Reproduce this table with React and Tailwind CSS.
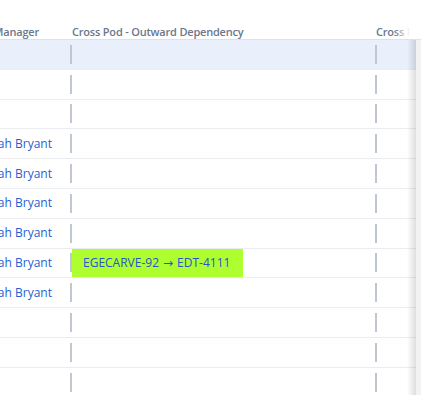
import React from "react";

const rows = [
  { name: false },
  { name: false },
  { name: false },
  { name: true },
  { name: true },
  { name: true },
  { name: true },
  { name: true, dep: true },
  { name: true },
  { name: false },
  { name: false },
  { name: false },
];

function Bar() {
  return <div className="w-[2px] h-[19px] bg-[#c1c7d0] shrink-0" />;
}

export default function App() {
  return (
    <div
      className="relative w-[421px] h-[395px] overflow-hidden bg-white"
      style={{ fontFamily: '"Open Sans", "Noto Sans", sans-serif' }}
    >
      {/* header */}
      <div className="flex h-[40px] border-b border-[#dfe1e6] text-[11px] leading-[15px] font-semibold tracking-[-0.2px] text-[#6b778c]">
        <div className="w-[70px] shrink-0 overflow-hidden flex justify-end items-end pb-0 pr-[31px] whitespace-nowrap">
          <span>Engineering Manager</span>
        </div>
        <div className="w-[305px] shrink-0 flex items-end pb-0 pl-[2px] whitespace-nowrap overflow-hidden">
          Cross Pod - Outward Dependency
        </div>
        <div className="flex-1 flex items-end pb-0 pl-[1px] whitespace-nowrap overflow-hidden">
          Cross Pod - Inward Dependency
        </div>
      </div>
      {/* rows */}
      {rows.map((r, i) => (
        <div
          key={i}
          className={
            "flex h-[29.8px] border-b border-[#ebecf0] text-[12px] " +
            (i === 0 ? "bg-[#e9f0fb]" : "bg-white")
          }
        >
          <div className="w-[70px] shrink-0 overflow-hidden flex justify-end items-center pr-[18px] whitespace-nowrap text-[#1f5fd1]">
            {r.name ? <span>Sarah Bryant</span> : null}
          </div>
          <div className="w-[305px] shrink-0 flex items-center">
            <Bar />
            {r.dep ? (
              <div className="h-full w-[171px] bg-[#adff2f] flex items-center pl-[11px] text-[#2a55c8] whitespace-nowrap">
                <span>EGECARVE-92</span>
                <span className="mx-[4px]" style={{ fontFamily: '"DejaVu Sans", sans-serif' }}>
                  →
                </span>
                <span>EDT-4111</span>
              </div>
            ) : null}
          </div>
          <div className="flex-1 flex items-center">
            <Bar />
          </div>
        </div>
      ))}
      {/* header fade */}
      <div className="absolute top-0 right-0 h-[39px] w-[27px] bg-gradient-to-r from-white/0 to-white to-[60%]" />
      {/* right shadow */}
      <div className="absolute top-[40px] bottom-0 right-0 w-[14px] flex">
        <div className="w-[9px] h-full bg-gradient-to-r from-black/0 to-black/[0.13]" />
        <div className="flex-1 h-full bg-[#f1f2f4]" />
      </div>
    </div>
  );
}
